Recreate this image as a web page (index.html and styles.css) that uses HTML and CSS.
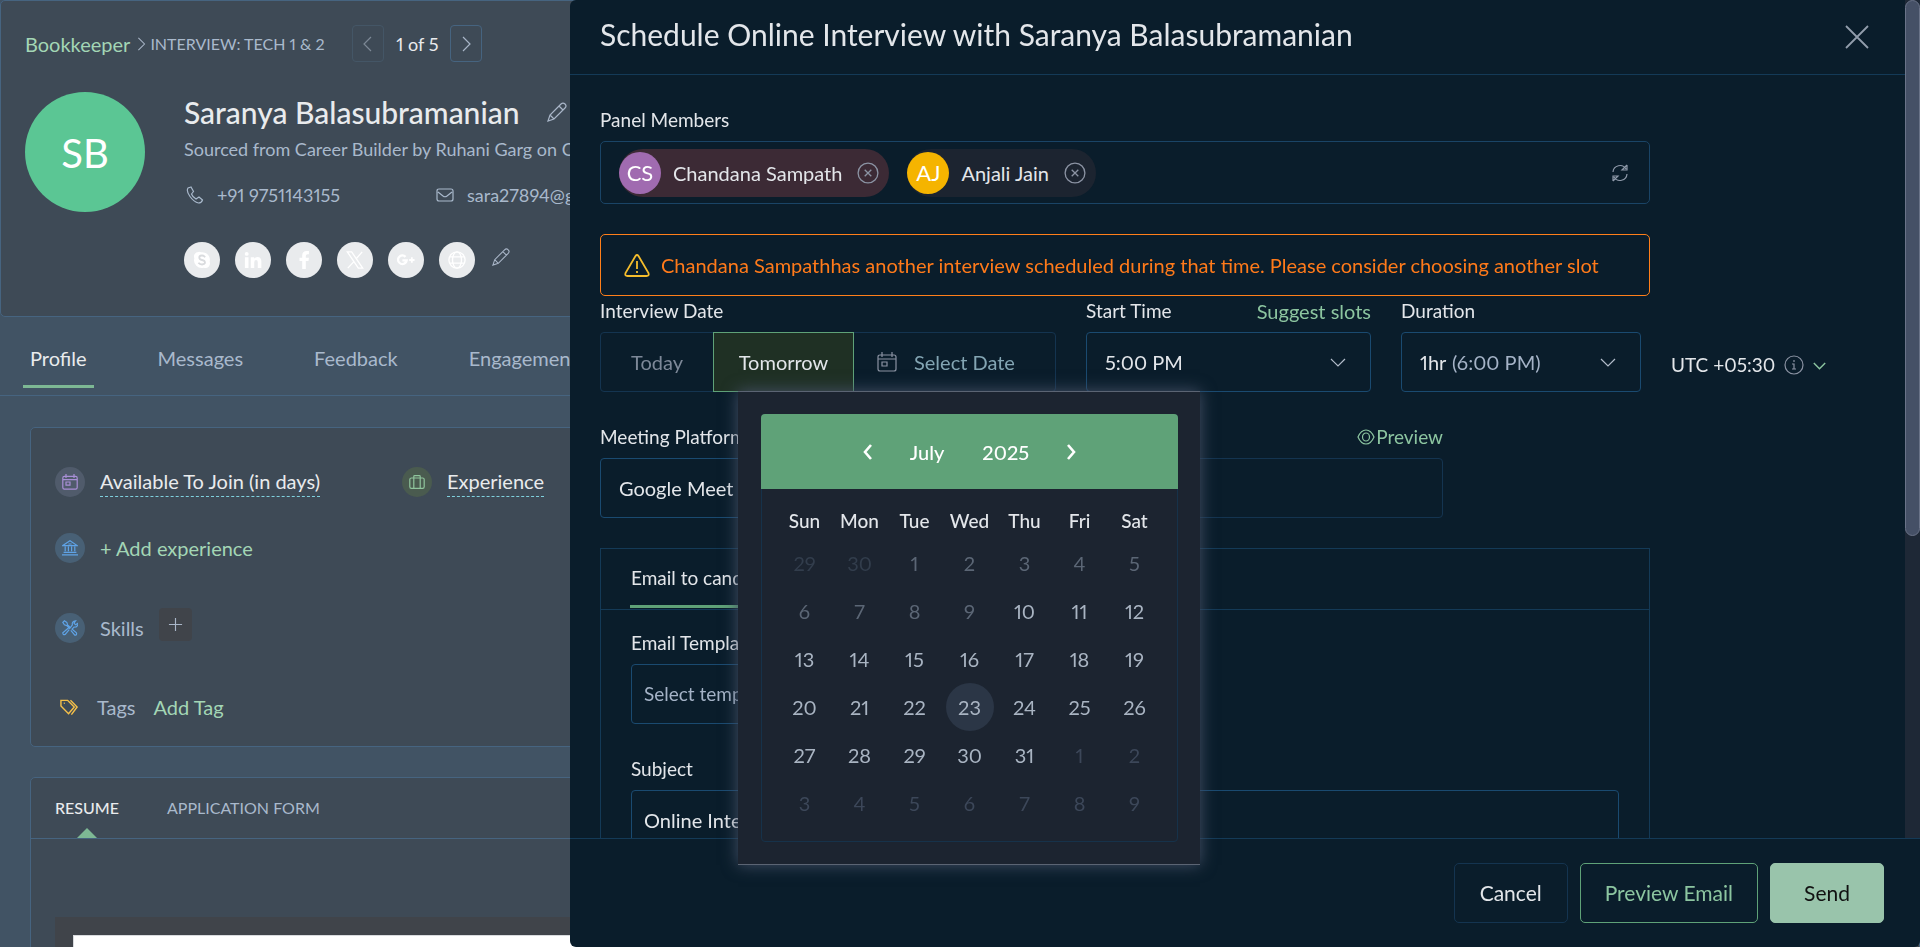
FILE: index.html
```html
<!DOCTYPE html>
<html lang="en">
<head>
    <meta charset="UTF-8">
    <title>Schedule Online Interview</title>
    <link rel="stylesheet" href="styles.css">
</head>
<body>
    <svg class="sprite" aria-hidden="true">
        <symbol id="i-down" viewBox="0 0 16 16"><path d="M1 5l7 7 7-7"/></symbol>
        <symbol id="i-left" viewBox="0 0 16 16"><path d="M11 1L4 8l7 7"/></symbol>
        <symbol id="i-right" viewBox="0 0 16 16"><path d="M5 1l7 7-7 7"/></symbol>
        <symbol id="i-pencil" viewBox="0 0 20 20"><path d="M1 19l2-6L14 2q2-2 4 0t0 4L7 17zM3 13l4 4M12 4l4 4"/></symbol>
        <symbol id="i-calendar" viewBox="0 0 20 20"><path d="M3 3h14q2 0 2 2v12q0 2-2 2H3q-2 0-2-2V5q0-2 2-2zM1 7h18M5 0v5M15 0v5M5 10h5v4H5z"/></symbol>
        <symbol id="i-close" viewBox="0 0 20 20"><circle cx="10" cy="10" r="9"/><path d="M7 7l6 6M13 7l-6 6"/></symbol>
    </svg>

    <!-- Candidate profile -->
    <main class="profile">
        <section class="profile-head">
            <nav class="crumbs">
                <a class="crumb-job" href="#">Bookkeeper</a>
                <svg class="icon crumb-arrow"><use href="#i-right"/></svg>
                <span class="crumb-stage">INTERVIEW: TECH 1 &amp; 2</span>
                <button class="pager-btn off" type="button" aria-label="Previous"><svg class="icon"><use href="#i-left"/></svg></button>
                <span class="pager-text">1 of 5</span>
                <button class="pager-btn" type="button" aria-label="Next"><svg class="icon"><use href="#i-right"/></svg></button>
            </nav>
            <div class="candidate">
                <div class="avatar">SB</div>
                <div class="candidate-info">
                    <h1 class="name">Saranya Balasubramanian <svg class="icon name-edit"><use href="#i-pencil"/></svg></h1>
                    <p class="source">Sourced from Career Builder by Ruhani Garg on Oct 12</p>
                    <div class="contacts">
                        <span class="contact"><svg class="icon" viewBox="0 0 18 18"><path d="M5 1L2 2Q0 5 4 10.500T12.500 17q3 0 4-3l-3.500-3-3 2Q6.500 11 5.500 8l2-2.500z"/></svg>+91 9751143155</span>
                        <span class="contact"><svg class="icon" viewBox="0 0 18 18"><path d="M3 3h12q2 0 2 2v8q0 2-2 2H3q-2 0-2-2V5q0-2 2-2zM2 6l5 4q2 1.500 4 0l5-4"/></svg>sara27894@gmail.com</span>
                    </div>
                    <div class="socials">
                        <a class="social" href="#" aria-label="Skype"><svg viewBox="0 0 20 20"><path fill="#fff" d="M6 1a5 5 0 0 0-4.500 7A8.500 8.500 0 0 0 12 18.500 5 5 0 0 0 18.500 12 8.500 8.500 0 0 0 9 1.500 5 5 0 0 0 6 1z"/><path fill="none" stroke="#d9dbde" stroke-width="2" d="M13.500 7Q12 5 10 5 7 5 7 7.200T10 10t3.300 2.600T10 15q-2.500 0-4-2"/></svg></a>
                        <a class="social" href="#" aria-label="LinkedIn"><svg viewBox="0 0 20 20"><path fill="#fff" d="M1 7h4v12H1zM3 1a2.200 2.200 0 1 1 0 4.400A2.200 2.200 0 0 1 3 1zM7.500 7h3.800v1.700Q12.500 6.700 15 6.700q4.300 0 4.300 5V19h-4v-6.500q0-2.500-1.900-2.500-2 0-2 2.500V19H7.500z"/></svg></a>
                        <a class="social" href="#" aria-label="Facebook"><svg viewBox="0 0 20 20"><path fill="#fff" d="M8 20v-9H5V7.500h3V5q0-5 5-5h2.500v3.500H14q-2 0-2 2v2h3.500L15 11h-3v9z"/></svg></a>
                        <a class="social" href="#" aria-label="X"><svg viewBox="0 0 20 20"><path fill="none" stroke="#fff" stroke-width="1.500" d="M1.500 1h4.800l12.200 18h-4.800zM18 1l-7 8M9 11.500L2 19"/></svg></a>
                        <a class="social" href="#" aria-label="Google Plus"><svg viewBox="0 0 20 20"><path fill="none" stroke="#fff" stroke-width="2.600" d="M9.500 6.500A4.800 4.800 0 1 0 10.700 10.500H6"/><path fill="none" stroke="#fff" stroke-width="2" d="M16.500 7v6M13.500 10h6"/></svg></a>
                        <a class="social" href="#" aria-label="Website"><svg viewBox="0 0 20 20"><g fill="none" stroke="#fff" stroke-width="1.500"><circle cx="10" cy="10" r="9"/><ellipse cx="10" cy="10" rx="5" ry="9"/><path d="M2 6.500h16M2 13.500h16"/></g></svg></a>
                        <svg class="icon social-edit"><use href="#i-pencil"/></svg>
                    </div>
                </div>
            </div>
        </section>

        <nav class="tabs">
            <a class="tab active" href="#">Profile</a>
            <a class="tab" href="#">Messages</a>
            <a class="tab" href="#">Feedback</a>
            <a class="tab" href="#">Engagement</a>
        </nav>

        <section class="card facts">
            <div class="fact-row">
                <div class="fact fact-wide">
                    <span class="dot purple"><svg class="icon"><use href="#i-calendar"/></svg></span>
                    <span class="fact-title">Available To Join (in days)</span>
                </div>
                <div class="fact">
                    <span class="dot green"><svg class="icon" viewBox="0 0 20 20"><path d="M3 5h14q2 0 2 2v9q0 2-2 2H3q-2 0-2-2V7q0-2 2-2zM6 18V3q0-1 1-1h6q1 0 1 1v15"/></svg></span>
                    <span class="fact-title">Experience</span>
                </div>
            </div>
            <div class="fact fact-experience">
                <span class="dot blue"><svg class="icon" viewBox="0 0 20 20"><path d="M1 7l9-6 9 6zM4 8v6M8 8v6M12 8v6M16 8v6M2 15.500h16M0 18.500h20M8 5h4"/></svg></span>
                <a class="link" href="#">+ Add experience</a>
            </div>
            <div class="fact fact-skills">
                <span class="dot blue"><svg class="icon" viewBox="0 0 20 20"><path d="M1 3l2-2 3 2 1 3 4 4M3 1L1 3l2 3 3 1 4 4M12 11l6 5q1 3-2 3l-5-6M9 12l-5 6q-3 1-3-2l7-6M11 9l2-3q-1-4 4-5l-2 3 2 2 3-2q0 5-5 5l-2 2"/></svg></span>
                <span class="fact-label">Skills</span>
                <button class="add-skill" type="button" aria-label="Add skill"><svg class="icon" viewBox="0 0 16 16"><path d="M8 1v14M1 8h14"/></svg></button>
            </div>
            <div class="fact fact-tags">
                <svg class="icon tags-icon" viewBox="0 0 20 18"><path d="M1 2h7l7 7-6 7-8-8zM11 2l7 7-6 8M4 5h1"/></svg>
                <span class="fact-label">Tags</span>
                <a class="link" href="#">Add Tag</a>
            </div>
        </section>

        <section class="card resume">
            <nav class="resume-tabs">
                <a class="resume-tab active" href="#">RESUME</a>
                <a class="resume-tab" href="#">APPLICATION FORM</a>
            </nav>
            <div class="viewer"><div class="sheet"></div></div>
        </section>
    </main>

    <!-- Schedule drawer -->
    <aside class="drawer">
        <div class="drawer-scroll">
            <div class="drawer-content">
                <header class="drawer-head">
                    <h2 class="drawer-title">Schedule Online Interview with Saranya Balasubramanian</h2>
                    <button class="drawer-close" type="button" aria-label="Close"><svg class="icon" viewBox="0 0 24 24"><path d="M1 1l22 22M23 1L1 23"/></svg></button>
                </header>
                <form class="form">
                    <div class="label-row"><span class="label">Panel Members</span></div>
                    <div class="members">
                        <span class="chip conflict">
                            <span class="chip-avatar purple-bg">CS</span>Chandana Sampath
                            <button class="chip-remove" type="button" aria-label="Remove"><svg class="icon"><use href="#i-close"/></svg></button>
                        </span>
                        <span class="chip">
                            <span class="chip-avatar amber-bg">AJ</span>Anjali Jain
                            <button class="chip-remove" type="button" aria-label="Remove"><svg class="icon"><use href="#i-close"/></svg></button>
                        </span>
                        <button class="refresh" type="button" aria-label="Refresh"><svg class="icon" viewBox="0 0 18 18"><path d="M2 8a7 7 0 0 1 13-3M16 1v5h-5l5-5M16 10a7 7 0 0 1-13 3M2 17v-5h5l-5 5"/></svg></button>
                    </div>

                    <div class="alert">
                        <svg class="icon" viewBox="0 0 26 23"><path d="M11.500 2q1.500-2 3 0l10 17q1 3-2 3h-19q-3 0-2-3zM13 7v8M13 17v2"/></svg>
                        Chandana Sampathhas another interview scheduled during that time. Please consider choosing another slot
                    </div>

                    <div class="when">
                        <div class="field">
                            <div class="label-row"><span class="label">Interview Date</span></div>
                            <div class="segments">
                                <button class="segment today" type="button">Today</button>
                                <button class="segment tomorrow" type="button">Tomorrow</button>
                                <button class="segment pick" type="button"><svg class="icon"><use href="#i-calendar"/></svg>Select Date</button>
                            </div>
                        </div>
                        <div class="field">
                            <div class="label-row"><label class="label" for="start">Start Time</label><a class="link" href="#">Suggest slots</a></div>
                            <div class="box">
                                <select id="start" class="control"><option>5:00 PM</option></select>
                                <svg class="icon chevron"><use href="#i-down"/></svg>
                            </div>
                        </div>
                        <div class="field">
                            <div class="label-row"><label class="label" for="duration">Duration</label></div>
                            <div class="box">
                                <select id="duration" class="control control-short"><option>1hr</option></select>
                                <span class="until">(6:00 PM)</span>
                                <svg class="icon chevron"><use href="#i-down"/></svg>
                            </div>
                        </div>
                        <button class="zone" type="button">UTC +05:30
                            <svg class="icon zone-info" viewBox="0 0 20 20"><circle cx="10" cy="10" r="9"/><path d="M8 9h2v5M8 14h4M10 5v2"/></svg>
                            <svg class="icon zone-arrow"><use href="#i-down"/></svg>
                        </button>
                    </div>

                    <div class="platform">
                        <div class="label-row">
                            <label class="label" for="platform">Meeting Platform</label>
                            <a class="link preview-link" href="#"><svg class="icon" viewBox="0 0 18 16"><path d="M1 8q3-7 8-7t8 7q-3 7-8 7T1 8z"/><ellipse cx="9" cy="8" rx="3.500" ry="4"/></svg>Preview</a>
                        </div>
                        <div class="platform-fields">
                            <div class="box"><select id="platform" class="control"><option>Google Meet</option></select></div>
                            <div class="box dim"><input class="control" type="text" aria-label="Meeting link" disabled></div>
                        </div>
                    </div>

                    <section class="email">
                        <div class="email-tabs"><a class="email-tab" href="#">Email to candidate</a></div>
                        <div class="email-body">
                            <div class="label-row"><label class="label" for="template">Email Template</label></div>
                            <div class="box box-template"><select id="template" class="control muted"><option>Select template</option></select></div>
                            <div class="label-row"><label class="label" for="subject">Subject</label></div>
                            <div class="box"><input id="subject" class="control" type="text" value="Online Interview"></div>
                        </div>
                    </section>
                </form>
            </div>
            <div class="track"><div class="thumb"></div></div>
        </div>

        <footer class="drawer-foot">
            <button class="btn" type="button">Cancel</button>
            <button class="btn outline" type="button">Preview Email</button>
            <button class="btn solid" type="button">Send</button>
        </footer>

        <div class="datepicker">
            <div class="calendar">
                <div class="cal-head">
                    <button class="cal-nav" type="button" aria-label="Previous month"><svg class="icon" viewBox="0 0 12 16"><path d="M9 1L3 8l6 7"/></svg></button>
                    <span class="cal-month">July</span>
                    <span class="cal-year">2025</span>
                    <button class="cal-nav" type="button" aria-label="Next month"><svg class="icon" viewBox="0 0 12 16"><path d="M3 1l6 7-6 7"/></svg></button>
                </div>
                <table class="cal-days">
                    <thead>
                        <tr><th>Sun</th><th>Mon</th><th>Tue</th><th>Wed</th><th>Thu</th><th>Fri</th><th>Sat</th></tr>
                    </thead>
                    <tbody>
                        <tr><td class="before">29</td><td class="before">30</td><td class="past">1</td><td class="past">2</td><td class="past">3</td><td class="past">4</td><td class="past">5</td></tr>
                        <tr><td class="past">6</td><td class="past">7</td><td class="past">8</td><td class="past">9</td><td>10</td><td>11</td><td>12</td></tr>
                        <tr><td>13</td><td>14</td><td>15</td><td>16</td><td>17</td><td>18</td><td>19</td></tr>
                        <tr><td>20</td><td>21</td><td>22</td><td><span class="hover">23</span></td><td>24</td><td>25</td><td>26</td></tr>
                        <tr><td>27</td><td>28</td><td>29</td><td>30</td><td>31</td><td class="after">1</td><td class="after">2</td></tr>
                        <tr><td class="after">3</td><td class="after">4</td><td class="after">5</td><td class="after">6</td><td class="after">7</td><td class="after">8</td><td class="after">9</td></tr>
                    </tbody>
                </table>
            </div>
        </div>
    </aside>
</body>
</html>
```
FILE: styles.css
```css
* {
    box-sizing: border-box;
}
body {
    margin: 0;
    height: 100vh;
    overflow: hidden;
    background: #415364;
    color: #e9ebed;
    font-family: Lato, "Open Sans", sans-serif;
    font-size: 20px;
    font-variant-numeric: proportional-nums;
    line-height: 24px;
}
h1, h2, p {
    margin: 0;
    font-weight: 400;
}
a {
    color: inherit;
    text-decoration: none;
}
button, input, select {
    font: inherit;
    font-variant-numeric: inherit;
    color: inherit;
    background: none;
    border: 0;
    padding: 0;
    margin: 0;
}
.sprite {
    display: none;
}
.icon {
    fill: none;
    stroke: currentColor;
    stroke-width: 1.2;
    flex: none;
    width: 18px;
    height: 18px;
}
.link {
    color: #8cc5a0;
}

/* profile */
.profile {
    height: 100vh;
    overflow: hidden;
}
.profile .link {
    color: #a3d6b5;
}
.profile-head {
    height: 317px;
    padding: 24px;
    border: 1px solid #466480;
    border-radius: 5px;
    background: #3e4a56;
}
.crumbs {
    display: flex;
    align-items: center;
    height: 37px;
}
.crumb-job {
    color: #a3d6b5;
}
.crumb-arrow {
    width: 14px;
    height: 14px;
    margin: 0 2px 0 4px;
    color: #a9b6c8;
}
.crumb-stage {
    width: 202px;
    color: #a9b9cc;
    font-size: 16px;
}
.pager-btn {
    width: 32px;
    height: 37px;
    border: 1px solid #466480;
    border-radius: 4px;
    color: #a9b6c8;
}
.pager-btn .icon {
    width: 16px;
    height: 16px;
}
.pager-btn.off {
    border-color: #445666;
    color: #7d8996;
}
.pager-text {
    width: 66px;
    font-size: 18px;
    text-align: center;
}
.candidate {
    display: flex;
    gap: 39px;
    margin-top: 30px;
}
.avatar {
    width: 120px;
    height: 120px;
    border-radius: 50%;
    background: #5bc694;
    color: #fff;
    font-size: 40px;
    line-height: 122px;
    text-align: center;
}
.name {
    display: flex;
    align-items: center;
    gap: 28px;
    height: 40px;
    font-size: 30px;
    font-weight: 500;
}
.name-edit {
    width: 20px;
    height: 20px;
    color: #a9b6c8;
}
.source {
    margin-top: 5px;
    color: #a9b9cc;
    font-size: 18px;
}
.contacts {
    display: flex;
    margin-top: 22px;
    color: #a9b9cc;
    font-size: 18px;
}
.contact {
    display: flex;
    align-items: center;
    gap: 13px;
    width: 250px;
    padding-left: 2px;
}
.socials {
    display: flex;
    gap: 15px;
    margin-top: 35px;
}
.social {
    display: flex;
    align-items: center;
    justify-content: center;
    width: 36px;
    height: 36px;
    border-radius: 50%;
    background: #e9ebed;
}
.social svg {
    width: 18px;
    height: 18px;
}
.social-edit {
    margin: 6px 0 0 2px;
    color: #a9b6c8;
}
.tabs {
    display: flex;
    gap: 57px;
    height: 79px;
    padding-left: 23px;
    border-bottom: 1px solid #466480;
}
.tab {
    height: 71px;
    padding: 29px 7px 0;
    border-bottom: 3px solid transparent;
    color: #a9b9cc;
}
.tab.active {
    border-color: #7db894;
    color: #e9ebed;
}
.card {
    margin-left: 30px;
    border: 1px solid #466480;
    border-radius: 5px;
    background: #3e4a56;
}
.facts {
    height: 320px;
    margin-top: 31px;
    padding: 39px 24px;
}
.fact-row, .fact {
    display: flex;
    align-items: center;
}
.fact-wide {
    width: 347px;
}
.dot {
    display: flex;
    align-items: center;
    justify-content: center;
    width: 30px;
    height: 30px;
    margin-right: 15px;
    border-radius: 50%;
}
.dot .icon {
    width: 16px;
    height: 16px;
    stroke-width: 1.5;
}
.purple {
    background: #505b6b;
    color: #a98fd6;
}
.green {
    background: #4a5b4f;
    color: #8fc49c;
}
.blue {
    background: #486075;
    color: #5fa3e6;
}
.fact-title {
    height: 29px;
    border-bottom: 1px dashed #7fd0dd;
    line-height: 27px;
}
.fact-label {
    color: #a9b9cc;
}
.fact-experience {
    margin-top: 36px;
}
.fact-skills {
    height: 36px;
    margin-top: 47px;
}
.add-skill {
    width: 33px;
    height: 33px;
    margin: 0 0 8px 15px;
    border-radius: 4px;
    background: #40444a;
    color: #a9b6c8;
}
.add-skill .icon {
    width: 15px;
    height: 15px;
}
.fact-tags {
    gap: 18px;
    margin-top: 49px;
    padding-left: 5px;
}
.tags-icon {
    width: 19px;
    height: 18px;
    color: #f5c04a;
    stroke-width: 1.5;
}
.resume {
    height: 240px;
    margin-top: 30px;
}
.resume-tabs {
    display: flex;
    gap: 48px;
    height: 61px;
    padding: 18px 24px 0;
    border-bottom: 1px solid #466480;
    font-size: 16px;
}
.resume-tab {
    position: relative;
    color: #a9b9cc;
}
.resume-tab.active {
    color: #e9ebed;
    font-weight: 500;
}
.resume-tab.active::after {
    content: "";
    position: absolute;
    bottom: 0;
    left: 50%;
    margin-left: -10px;
    border: 10px solid transparent;
    border-top: 0;
    border-bottom-color: #7db894;
}
.viewer {
    margin: 78px 0 0 24px;
    padding: 18px;
    background: #40444a;
}
.sheet {
    height: 100px;
    border: 1px solid #d9dbde;
    background: #fff;
}

/* drawer */
.drawer {
    position: fixed;
    top: 0;
    right: 0;
    bottom: 0;
    display: flex;
    flex-direction: column;
    width: 100%;
    max-width: 1350px;
    border-radius: 6px;
    background: #0a1d2b;
    color: #e3e6ea;
}
.drawer-scroll {
    display: flex;
    flex: 1;
    min-height: 0;
    overflow: hidden;
}
.drawer-content {
    flex: 1;
}
.drawer-head {
    display: flex;
    justify-content: space-between;
    align-items: flex-start;
    height: 75px;
    padding: 14px 36px 0 30px;
    border-bottom: 1px solid #143a57;
}
.drawer-title {
    font-size: 30px;
    line-height: 40px;
}
.drawer-close {
    margin-top: 11px;
    height: 24px;
    color: #929dac;
}
.drawer-close .icon {
    width: 24px;
    height: 24px;
    stroke-width: 1.8;
}
.form {
    padding: 33px 30px 0;
}
.label-row {
    display: flex;
    justify-content: space-between;
    margin-bottom: 9px;
}
.label {
    font-size: 19px;
}
.members, .alert {
    display: flex;
    align-items: center;
    max-width: 1050px;
    border: 1px solid #1a4466;
    border-radius: 5px;
}
.members {
    height: 63px;
    padding: 0 20px 0 18px;
}
.chip {
    display: flex;
    align-items: center;
    height: 48px;
    margin-right: 18px;
    padding-right: 10px;
    border-radius: 24px;
    background: #1c2430;
}
.chip.conflict {
    background: #3c2a35;
}
.chip-avatar {
    width: 42px;
    height: 42px;
    margin-right: 12px;
    border-radius: 50%;
    color: #fff;
    font-size: 22px;
    line-height: 42px;
    text-align: center;
}
.purple-bg {
    background: #a06bb0;
}
.amber-bg {
    background: #f5b400;
}
.chip-remove {
    height: 22px;
    margin-left: 15px;
    color: #8b93a3;
}
.chip-remove .icon {
    display: block;
    width: 22px;
    height: 22px;
}
.refresh {
    height: 18px;
    margin-left: auto;
    color: #8f9aaa;
}
.refresh .icon {
    display: block;
}
.alert {
    gap: 11px;
    height: 62px;
    margin: 30px 0 3px;
    padding: 0 23px;
    border-color: #ff7f1a;
    color: #ff7a1a;
}
.alert .icon {
    width: 26px;
    height: 23px;
    color: #f5bd2c;
    stroke-width: 1.8;
}
.when {
    display: grid;
    grid-template-columns: 456px 285px 240px auto;
    gap: 30px;
    margin-bottom: 33px;
}
.box, .segments {
    display: flex;
    align-items: center;
    height: 60px;
    border: 1px solid #1a4a70;
    border-radius: 4px;
}
.box {
    padding: 0 18px;
}
.box.dim, .segments {
    border-color: #143450;
}
.control {
    flex: 1;
    min-width: 0;
    height: 100%;
    appearance: none;
    outline: none;
}
.control-short {
    flex: none;
    width: 32px;
}
.until {
    flex: 1;
    color: #a5b3c7;
}
.muted {
    color: #a5b3c7;
    font-size: 19px;
}
.chevron {
    width: 16px;
    height: 16px;
    margin-right: 6px;
    color: #b3bdcb;
}
.segment {
    height: 60px;
    margin: -1px 0;
}
.today {
    width: 112px;
    color: #7d8898;
}
.tomorrow {
    width: 141px;
    border: 1px solid #5fa278;
    background: #1f3024;
}
.pick {
    display: flex;
    align-items: center;
    gap: 17px;
    padding-left: 23px;
    color: #83a5b3;
}
.pick .icon {
    width: 20px;
    height: 20px;
    color: #8b93a3;
}
.zone {
    display: flex;
    align-items: center;
    align-self: end;
    justify-self: start;
    gap: 9px;
    height: 54px;
    font-size: 19px;
}
.zone-info {
    width: 20px;
    height: 20px;
    color: #8b93a3;
}
.zone-arrow {
    width: 13px;
    height: 13px;
    color: #8cc5a0;
    stroke-width: 1.8;
}
.platform {
    max-width: 843px;
}
.platform-fields {
    display: grid;
    grid-template-columns: 1fr 1fr;
    gap: 30px;
}
.preview-link {
    display: flex;
    align-items: center;
    gap: 1px;
    font-size: 19px;
}
.preview-link .icon {
    height: 16px;
}
.email {
    max-width: 1050px;
    margin-top: 30px;
    border: 1px solid #143a57;
}
.email-tabs {
    display: flex;
    height: 61px;
    padding-left: 29px;
    border-bottom: 1px solid #143a57;
}
.email-tab {
    height: 59px;
    padding: 17px 1px 0;
    border-bottom: 3px solid #5fa278;
    font-size: 19px;
}
.email-body {
    padding: 21px 30px 30px;
}
.email-body .box {
    padding: 0 12px;
}
.box-template {
    width: 400px;
    margin-bottom: 33px;
}
.track {
    width: 15px;
    background: #1e2836;
}
.thumb {
    height: 64%;
    border: 1px solid #6a7388;
    border-radius: 8px;
    background: #455066;
}
.drawer-foot {
    display: flex;
    justify-content: flex-end;
    gap: 12px;
    height: 109px;
    padding: 24px 36px 0;
    border-top: 1px solid #143a57;
}
.btn {
    height: 60px;
    min-width: 114px;
    padding: 0 24px;
    border: 1px solid #143450;
    border-radius: 5px;
    font-size: 21px;
}
.btn.outline {
    border-color: #5fa278;
    color: #8cc5a0;
}
.btn.solid {
    border-color: #99c4ab;
    background: #99c4ab;
    color: #111;
}

/* calendar popup */
.datepicker {
    position: absolute;
    top: 391px;
    left: 168px;
    width: 462px;
    padding: 22px 22px 22px 23px;
    border: solid #5b6473;
    border-width: 1px 0;
    background: #1c2430;
    box-shadow: 0 0 15px #455066;
}
.calendar {
    border: 1px solid #16324a;
    border-radius: 4px;
}
.cal-head {
    display: flex;
    align-items: center;
    justify-content: center;
    height: 75px;
    margin: -1px -1px 0;
    border-radius: 4px 4px 0 0;
    background: #5fa278;
    color: #fff;
    font-weight: 500;
}
.cal-nav .icon {
    display: block;
    width: 12px;
    height: 16px;
    stroke-width: 2.6;
}
.cal-month {
    margin: 0 38px 0 36px;
}
.cal-year {
    margin-right: 36px;
}
.cal-days {
    width: 385px;
    margin: 14px auto;
    border-collapse: collapse;
    table-layout: fixed;
    color: #a9b4c2;
}
.cal-days th {
    height: 36px;
    padding: 0;
    color: #e3e6ea;
    font-size: 19px;
    font-weight: 500;
}
.cal-days td {
    height: 48px;
    padding: 0;
    font-size: 20px;
    text-align: center;
}
.cal-days .past {
    color: #5b6675;
}
.cal-days .before {
    color: #323d4c;
}
.cal-days .after {
    color: #3c4759;
}
.hover {
    display: block;
    width: 48px;
    height: 48px;
    margin: 0 auto;
    border-radius: 50%;
    background: #2b3646;
    line-height: 48px;
}
```
